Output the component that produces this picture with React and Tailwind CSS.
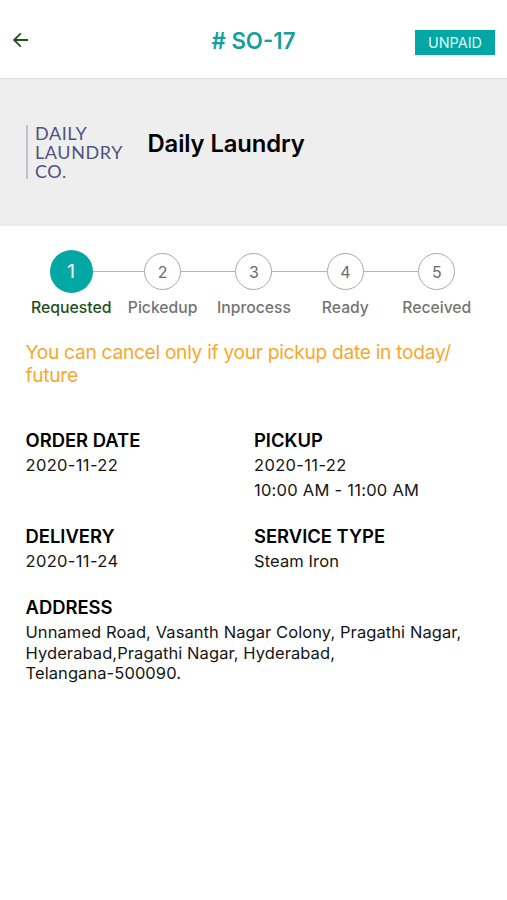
const steps = ["Requested", "Pickedup", "Inprocess", "Ready", "Received"];

const order = {
  id: "SO-17",
  status: "UNPAID",
  store: "Daily Laundry",
  currentStep: 0,
  orderDate: "2020-11-22",
  pickupDate: "2020-11-22",
  pickupSlot: "10:00 AM - 11:00 AM",
  deliveryDate: "2020-11-24",
  serviceType: "Steam Iron",
};

function StoreLogo() {
  return (
    <div className="flex h-[54px] w-[100px] shrink-0 flex-col justify-center border-l-2 border-[#c0c0d0] pl-[7px] font-['Lato',sans-serif] text-[18px] leading-[19px] tracking-[0.6px] text-[#505280]">
      <span>DAILY</span>
      <span>LAUNDRY</span>
      <span>CO.</span>
    </div>
  );
}

function Stepper({ current }) {
  return (
    <div className="flex pt-6 pl-[25.5px]">
      {steps.map((label, i) => {
        const active = i === current;
        return (
          <div key={label} className="flex w-[91.4px] shrink-0 flex-col items-center">
            <div className="flex h-[43px] w-full items-center">
              <div className={i === 0 ? "flex-1" : "h-[1.5px] flex-1 bg-[#b4b4b4]"} />
              {active ? (
                <div className="flex size-[43px] items-center justify-center rounded-full bg-[#03a8a5] pt-px text-[19px] text-white">
                  {i + 1}
                </div>
              ) : (
                <div className="flex size-[37px] items-center justify-center rounded-full border-[1.5px] border-[#a8a8a8] text-base text-[#6b6b6b]">
                  {i + 1}
                </div>
              )}
              <div className={i === steps.length - 1 ? "flex-1" : "h-[1.5px] flex-1 bg-[#b4b4b4]"} />
            </div>
            <span
              className={
                active
                  ? "mt-[3px] text-[15.8px] leading-6 font-medium whitespace-nowrap text-[#22501c]"
                  : "mt-[3px] text-[15.7px] leading-6 font-medium whitespace-nowrap text-[#747474]"
              }
            >
              {label}
            </span>
          </div>
        );
      })}
    </div>
  );
}

function Field({ title, children }) {
  return (
    <div>
      <h3 className="text-[18.4px] leading-[25px] font-semibold text-black">{title}</h3>
      {children}
    </div>
  );
}

export default function App() {
  return (
    <div className="min-h-screen bg-white font-['Inter',sans-serif] text-[#151515]">
      {/* Header */}
      <header className="grid h-[79px] grid-cols-3 items-center border-b border-[#dedede] px-3 pt-[3px]">
        <button aria-label="Back" className="justify-self-start">
          <svg width="17" height="17" viewBox="0 0 17 17" fill="none" stroke="#22501c" strokeWidth="1.8">
            <path d="M16 8H2.3M8.8 1.3L2.1 8l6.7 6.7" />
          </svg>
        </button>
        <h1 className="justify-self-center text-[22.2px] font-semibold whitespace-nowrap text-[#12a09f]"># {order.id}</h1>
        <span className="mt-[3px] flex h-[25px] w-20 items-center justify-center justify-self-end bg-[#03a8a5] pt-px text-[14.4px] text-[#dff8f7]">
          {order.status}
        </span>
      </header>

      {/* Store */}
      <section className="flex h-[147px] items-start bg-[#eeeeee] pt-[46px] pl-[26px]">
        <StoreLogo />
        <h2 className="mt-[3px] ml-[21.5px] text-[23.8px] leading-8 font-semibold tracking-[-0.1px] text-black">
          {order.store}
        </h2>
      </section>

      <Stepper current={order.currentStep} />

      {/* Order details */}
      <main className="px-[25.5px]">
        <p className="mt-[21px] text-[19.2px] leading-[23px] tracking-[-0.3px] text-[#f9a72b]">
          You can cancel only if your pickup date in today/
          <br />
          future
        </p>

        <div className="mt-[41px] grid grid-cols-[228.5px_1fr] gap-y-[21px] text-[16.5px] leading-[25px]">
          <Field title="ORDER DATE">
            <p className="tracking-[0.35px]">{order.orderDate}</p>
          </Field>
          <Field title="PICKUP">
            <p className="tracking-[0.35px]">{order.pickupDate}</p>
            <p className="tracking-[0.25px]">{order.pickupSlot}</p>
          </Field>
          <Field title="DELIVERY">
            <p className="tracking-[0.35px]">{order.deliveryDate}</p>
          </Field>
          <Field title="SERVICE TYPE">
            <p className="tracking-[0.1px]">{order.serviceType}</p>
          </Field>
        </div>

        <div className="mt-[21px]">
          <Field title="ADDRESS">
            <p className="mt-0.5 text-[16.5px] leading-[20.6px] tracking-[0.08px] whitespace-nowrap">
              Unnamed Road, Vasanth Nagar Colony, Pragathi Nagar,
              <br />
              Hyderabad,Pragathi Nagar, Hyderabad,
              <br />
              Telangana-500090.
            </p>
          </Field>
        </div>
      </main>
    </div>
  );
}
